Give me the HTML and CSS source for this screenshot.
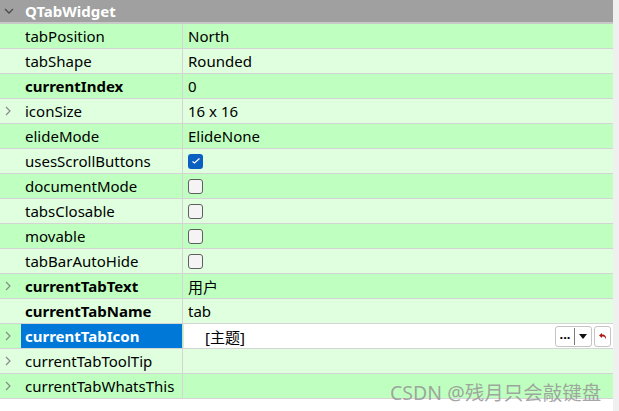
FILE: index.html
```html
<!DOCTYPE html>
<html lang="en">
  <head>
    <meta charset="UTF-8" />
    <title>Property Editor - QTabWidget</title>
    <link rel="stylesheet" href="styles.css">
  </head>
  <body>
    <div class="window">
      <div class="editor">
        <div class="group">
          <div class="toggle">
            <svg width="10" height="8" viewBox="0 0 10 8"><polyline points="1,2 5,6 9,2" fill="none" stroke="#4a4a4a" stroke-width="1.3"/></svg>
          </div>
          <div class="group-name">QTabWidget</div>
        </div>

        <div class="row dark">
          <div class="toggle"></div>
          <div class="name">tabPosition</div>
          <div class="value">North</div>
        </div>
        <div class="row light">
          <div class="toggle"></div>
          <div class="name">tabShape</div>
          <div class="value">Rounded</div>
        </div>
        <div class="row dark">
          <div class="toggle"></div>
          <div class="name changed">currentIndex</div>
          <div class="value">0</div>
        </div>
        <div class="row light">
          <div class="toggle"><svg class="chev" width="6" height="10" viewBox="0 0 6 10"><polyline points="1,1 5,5 1,9" fill="none" stroke="#8a8a8a" stroke-width="1.2"/></svg></div>
          <div class="name">iconSize</div>
          <div class="value">16 x 16</div>
        </div>
        <div class="row dark">
          <div class="toggle"></div>
          <div class="name">elideMode</div>
          <div class="value">ElideNone</div>
        </div>
        <div class="row light">
          <div class="toggle"></div>
          <div class="name">usesScrollButtons</div>
          <div class="value"><span class="check on"><svg width="10" height="8" viewBox="0 0 10 8"><polyline points="1.5,4.5 3.5,6 8.5,1.5" fill="none" stroke="#fff" stroke-width="1.2"/></svg></span></div>
        </div>
        <div class="row dark">
          <div class="toggle"></div>
          <div class="name">documentMode</div>
          <div class="value"><span class="check"></span></div>
        </div>
        <div class="row light">
          <div class="toggle"></div>
          <div class="name">tabsClosable</div>
          <div class="value"><span class="check"></span></div>
        </div>
        <div class="row dark">
          <div class="toggle"></div>
          <div class="name">movable</div>
          <div class="value"><span class="check"></span></div>
        </div>
        <div class="row light">
          <div class="toggle"></div>
          <div class="name">tabBarAutoHide</div>
          <div class="value"><span class="check"></span></div>
        </div>
        <div class="row dark">
          <div class="toggle"><svg class="chev" width="6" height="10" viewBox="0 0 6 10"><polyline points="1,1 5,5 1,9" fill="none" stroke="#8a8a8a" stroke-width="1.2"/></svg></div>
          <div class="name changed">currentTabText</div>
          <div class="value">用户</div>
        </div>
        <div class="row light">
          <div class="toggle"></div>
          <div class="name changed">currentTabName</div>
          <div class="value">tab</div>
        </div>
        <div class="row dark selected">
          <div class="toggle"><svg class="chev" width="6" height="10" viewBox="0 0 6 10"><polyline points="1,1 5,5 1,9" fill="none" stroke="#8a8a8a" stroke-width="1.2"/></svg></div>
          <div class="name changed">currentTabIcon</div>
          <div class="value editing">
            <span class="icon-text">[主题]</span>
            <span class="tool-combo">
              <span class="dots">...</span>
              <span class="drop"><svg width="8" height="5" viewBox="0 0 8 5"><polygon points="0,0 8,0 4,5" fill="#111"/></svg></span>
            </span>
            <span class="tool-reset">
              <svg width="10" height="9" viewBox="0 0 10 9"><path d="M4 1 L1 3.5 L4 6 L4 4.5 C6 4.5 7.5 5 8 7.5 C8.5 4.5 7 2.5 4 2.5 Z" fill="#b01818"/></svg>
            </span>
          </div>
        </div>
        <div class="row light">
          <div class="toggle"><svg class="chev" width="6" height="10" viewBox="0 0 6 10"><polyline points="1,1 5,5 1,9" fill="none" stroke="#8a8a8a" stroke-width="1.2"/></svg></div>
          <div class="name">currentTabToolTip</div>
          <div class="value"></div>
        </div>
        <div class="row dark">
          <div class="toggle"><svg class="chev" width="6" height="10" viewBox="0 0 6 10"><polyline points="1,1 5,5 1,9" fill="none" stroke="#8a8a8a" stroke-width="1.2"/></svg></div>
          <div class="name">currentTabWhatsThis</div>
          <div class="value"></div>
        </div>

        <div class="watermark">CSDN @残月只会敲键盘</div>
      </div>
      <div class="scroll-strip"></div>
    </div>
  </body>
</html>
```

FILE: styles.css
```css
* {
  margin: 0;
  padding: 0;
  box-sizing: border-box;
}

body {
  font-family: "Noto Sans", "Noto Sans CJK SC", sans-serif;
  font-size: 15px;
  color: #000;
  background: #fff;
  width: 619px;
  height: 411px;
  overflow: hidden;
}

.window {
  display: flex;
  height: 411px;
}

.editor {
  position: relative;
  width: 613px;
  display: flex;
  flex-direction: column;
}

.scroll-strip {
  flex: 1;
  background: #f0f0f0;
}

/* group header */
.group {
  display: flex;
  align-items: center;
  height: 24px;
  background: #a0a0a0;
  border-bottom: 2px solid #c8c8c8;
}

.group-name {
  padding-left: 4px;
  color: #fff;
  font-weight: 700;
}

.toggle {
  width: 21px;
  height: 100%;
  display: flex;
  align-items: center;
  padding-left: 4px;
}

.toggle .chev {
  margin-left: 1px;
}

/* property rows */
.row {
  display: flex;
  height: 25px;
  border-bottom: 1px solid #d4d4d4;
}

.row.dark {
  background: #bfffbf;
}

.row.light {
  background: #dfffdf;
}

.name {
  width: 162px;
  height: 100%;
  display: flex;
  align-items: center;
  padding-left: 4px;
  border-right: 1px solid #d4d4d4;
  white-space: nowrap;
}

.name.changed {
  font-weight: 700;
}

.value {
  flex: 1;
  display: flex;
  align-items: center;
  padding-left: 5px;
}

.selected .name {
  background: #0078d7;
  color: #fff;
}

.value.editing {
  background: #fff;
  margin-left: 1px;
  padding-left: 21px;
  padding-right: 2px;
}

.icon-text {
  flex: 1;
}

.tool-combo {
  display: flex;
  align-items: center;
  height: 21px;
  border: 1px solid #c4c4c4;
  border-radius: 3px;
  background: #fff;
}

.dots {
  width: 19px;
  text-align: center;
  font-size: 13px;
  font-weight: 700;
  line-height: 13px;
  padding-bottom: 4px;
  border-right: 1px solid #7a7a7a;
}

.drop {
  width: 16px;
  display: flex;
  justify-content: center;
}

.tool-reset {
  display: flex;
  align-items: center;
  justify-content: center;
  width: 17px;
  height: 21px;
  margin-left: 2px;
  border: 1px solid #c4c4c4;
  border-radius: 3px;
  background: #fff;
}

/* checkboxes */
.check {
  display: inline-flex;
  align-items: center;
  justify-content: center;
  width: 15px;
  height: 15px;
  border: 1.5px solid #5f5f5f;
  border-radius: 3px;
  background: #f4f4f4;
}

.check.on {
  border: none;
  background: #0a5fc0;
}

.watermark {
  position: absolute;
  left: 390px;
  top: 377px;
  font-size: 19.5px;
  color: rgba(150, 150, 150, 0.85);
  white-space: nowrap;
}
```
